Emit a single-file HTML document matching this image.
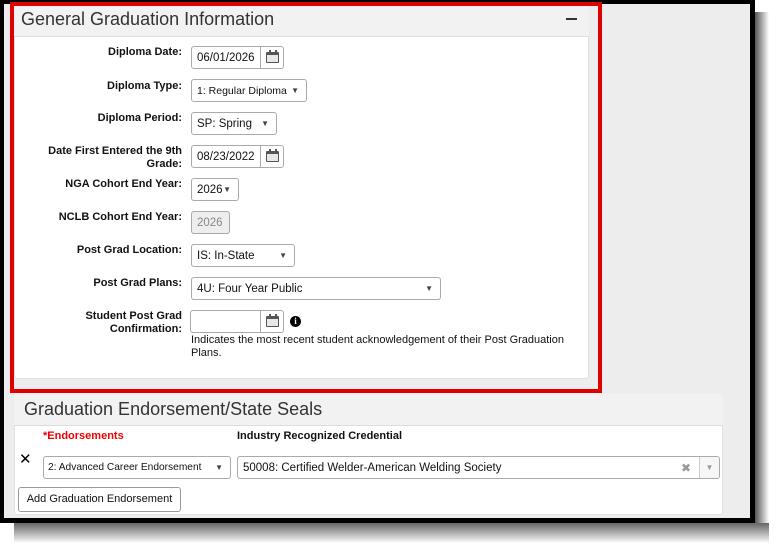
<!DOCTYPE html>
<html><head><style>
*{box-sizing:border-box;margin:0;padding:0}
body{width:780px;height:552px;background:#fff;font-family:"Liberation Sans",Arial,sans-serif;position:relative;overflow:hidden}
.a{position:absolute}
.lbl{position:absolute;right:598px;font-size:11px;font-weight:bold;color:#111;text-align:right;line-height:13px;white-space:nowrap}
.box{position:absolute;height:23px;border:1px solid #aaa;border-radius:3px;background:#fff;font-size:11.5px;color:#111;padding-left:5px;line-height:22px;white-space:nowrap;overflow:hidden}
.cal{position:absolute;right:0;top:0;width:23px;height:21px;border-left:1px solid #aaa}
.cal i{position:absolute;left:5px;top:5px;width:13px;height:11px;border:1.5px solid #555;border-top-width:3px;border-radius:1px;background:#e8e8e8}
.cal b{position:absolute;top:3px;width:2px;height:3px;background:#555}
.arr{position:absolute;right:7px;top:0;font-size:8px;color:#444}
.sm{font-size:10.5px}
</style></head><body>
<div class="a" style="left:0;top:0;width:755px;height:523px;background:#000"></div>
<div class="a" style="left:755px;top:12px;width:14px;height:525px;background:linear-gradient(90deg,#555,#ddd 80%,#fff)"></div>
<div class="a" style="left:14px;top:523px;width:755px;height:20px;background:linear-gradient(#666,#ddd 80%,#fff)"></div>
<div class="a" style="left:4px;top:4px;width:746px;height:514px;background:#ededed"></div>
<div class="a" style="left:10px;top:2px;width:592px;height:391px;border:4px solid #e00000;background:#ededed"></div>
<div class="a" style="left:14px;top:6px;width:575px;height:373px;background:#fff;border:1px solid #e0e0e0;border-radius:0 0 3px 3px"></div>
<div class="a" style="left:14px;top:6px;width:575px;height:31px;background:#f2f2f2;border-bottom:1px solid #ddd"></div>
<div class="a" style="left:21px;top:9px;font-size:18px;color:#333">General Graduation Information</div>
<div class="a" style="left:566px;top:18px;width:11px;height:2px;background:#333"></div>

<div class="lbl" style="top:46px">Diploma Date:</div>
<div class="box" style="left:191px;top:46px;width:93px">06/01/2026<div class="cal"><i></i><b style="left:8px"></b><b style="left:14px"></b></div></div>
<div class="lbl" style="top:80px">Diploma Type:</div>
<div class="box sm" style="left:191px;top:79px;width:116px">1: Regular Diploma<span class="arr">▼</span></div>
<div class="lbl" style="top:112px">Diploma Period:</div>
<div class="box" style="left:191px;top:112px;width:86px">SP: Spring<span class="arr">▼</span></div>
<div class="lbl" style="top:145px">Date First Entered the 9th<br>Grade:</div>
<div class="box" style="left:191px;top:145px;width:93px">08/23/2022<div class="cal"><i></i><b style="left:8px"></b><b style="left:14px"></b></div></div>
<div class="lbl" style="top:178px">NGA Cohort End Year:</div>
<div class="box" style="left:191px;top:178px;width:48px">2026<span class="arr">▼</span></div>
<div class="lbl" style="top:211px">NCLB Cohort End Year:</div>
<div class="box" style="left:191px;top:211px;width:39px;background:#eee;color:#888">2026</div>
<div class="lbl" style="top:244px">Post Grad Location:</div>
<div class="box" style="left:191px;top:244px;width:104px">IS: In-State<span class="arr">▼</span></div>
<div class="lbl" style="top:277px">Post Grad Plans:</div>
<div class="box" style="left:191px;top:277px;width:250px">4U: Four Year Public<span class="arr">▼</span></div>
<div class="lbl" style="top:310px">Student Post Grad<br>Confirmation:</div>
<div class="box" style="left:190px;top:310px;width:94px"><div class="cal"><i></i><b style="left:8px"></b><b style="left:14px"></b></div></div>
<div class="a" style="left:290px;top:316px;width:11px;height:11px;border-radius:50%;background:#000;color:#fff;font-size:9px;font-weight:bold;text-align:center;line-height:11px;font-family:'Liberation Serif',serif">i</div>
<div class="a" style="left:191px;top:334px;width:380px;font-size:11px;line-height:13px;color:#111">Indicates the most recent student acknowledgement of their Post Graduation Plans.</div>

<div class="a" style="left:14px;top:394px;width:709px;height:121px;background:#fff;border:1px solid #e0e0e0;border-radius:3px"></div>
<div class="a" style="left:14px;top:394px;width:709px;height:32px;background:#f2f2f2;border-bottom:1px solid #ddd;border-radius:3px 3px 0 0"></div>
<div class="a" style="left:24px;top:399px;font-size:18px;color:#333">Graduation Endorsement/State Seals</div>
<div class="a" style="left:43px;top:430px;font-size:11px;font-weight:bold;color:#e00">*Endorsements</div>
<div class="a" style="left:237px;top:430px;font-size:11px;font-weight:bold;color:#111">Industry Recognized Credential</div>
<div class="a" style="left:19px;top:450px;font-size:15px;color:#000">✕</div>
<div class="box" style="left:43px;top:456px;width:188px;font-size:10.2px;padding-left:4px">2: Advanced Career Endorsement<span class="arr">▼</span></div>
<div class="box" style="left:237px;top:456px;width:483px">50008: Certified Welder-American Welding Society<span class="a" style="right:28px;top:0;color:#999;font-size:12px">✖</span><span class="a" style="right:0;top:0;width:20px;height:21px;border-left:1px solid #ccc;background:#f6f6f6;color:#999;font-size:8px;text-align:center">▼</span></div>
<div class="a" style="left:18px;top:487px;width:163px;height:25px;border:1px solid #999;border-radius:3px;background:#fff;font-size:11px;text-align:center;line-height:23px;color:#111">Add Graduation Endorsement</div>
</body></html>
